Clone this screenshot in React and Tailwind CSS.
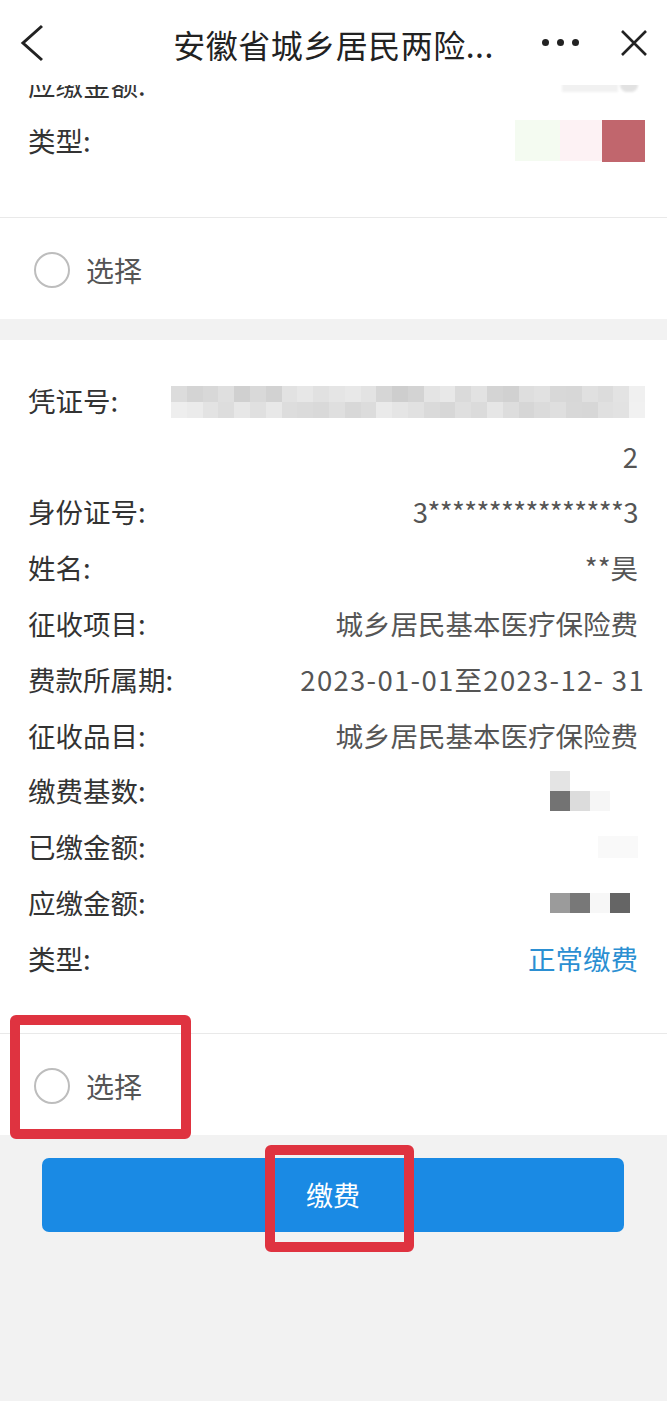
import React from "react";

const FONT = { fontFamily: '"Noto Sans CJK SC", "Noto Sans", sans-serif' };

const topRow = ["#dcdcdc","#d4d4d4","#d8d8d8","#dfdfdf","#d0d0d0","#d9d9d9","#d2d2d2","#e2e2e2","#e7e7e7","#e1e1e1","#e5e5e5","#e8e8e8","#e3e3e3","#d6d6d6","#cecece","#d3d3d3","#e4e4e4","#e8e8e8","#dadada","#e2e2e2","#d4d4d4","#d1d1d1","#dedede","#e1e1e1","#d8d8d8","#d7d7d7","#e0e0e0","#dcdcdc","#e3e3e3","#f0f0f0"];
const botRow = ["#eeeeee","#ebebeb","#e3e3e3","#dddddd","#e7e7e7","#e0e0e0","#e8e8e8","#dddddd","#dbdbdb","#d9d9d9","#dfdfdf","#d8d8d8","#dcdcdc","#eaeaea","#e5e5e5","#e1e1e1","#dadada","#d7d7d7","#dfdfdf","#dbdbdb","#e6e6e6","#dddddd","#d6d6d6","#dbdbdb","#dfdfdf","#d8d8d8","#d7d7d7","#e0e0e0","#e2e2e2","#f1f1f1"];

function Row({ label, children }) {
  return (
    <div className="flex h-[55.8px] items-center justify-between pl-[28px] pr-[29px]">
      <span className="text-[27.5px] text-[#333333] whitespace-nowrap">{label}</span>
      <div className="flex items-center justify-end text-[27.5px] text-[#555555] whitespace-nowrap">{children}</div>
    </div>
  );
}

function SelectRow() {
  return (
    <div className="flex h-[102px] items-center border-t border-[#e9e9e9] pl-[34px] pt-[3px]">
      <span className="h-[36px] w-[36px] rounded-full border-2 border-[#bdbdbd]" />
      <span className="ml-[16px] text-[28px] text-[#555555]">选择</span>
    </div>
  );
}

export default function App() {
  return (
    <div className="relative min-h-[1401px] w-full bg-[#f2f2f2]" style={FONT}>
      {/* header */}
      <div className="absolute left-0 right-0 top-0 z-10 grid h-[85px] grid-cols-[1fr_auto_1fr] items-center bg-white">
        <div className="flex items-center pl-[20px]">
          <svg width="24" height="38" viewBox="0 0 24 38">
            <polyline points="22,2 3,19 22,36" fill="none" stroke="#222" strokeWidth="3" strokeLinejoin="miter" />
          </svg>
        </div>
        <div className="text-[32px] text-[#222222] pt-[2px] tracking-[0.5px]">安徽省城乡居民两险...</div>
        <div className="flex items-center justify-end pr-[19px]">
          <div className="flex items-center gap-[8px]">
            <span className="h-[7px] w-[7px] rounded-full bg-[#222]" />
            <span className="h-[7px] w-[7px] rounded-full bg-[#222]" />
            <span className="h-[7px] w-[7px] rounded-full bg-[#222]" />
          </div>
          <svg className="ml-[41px]" width="28" height="28" viewBox="0 0 28 28">
            <path d="M2 2 L26 26 M26 2 L2 26" stroke="#222" strokeWidth="2.6" fill="none" />
          </svg>
        </div>
      </div>

      {/* first card (scrolled) */}
      <div className="bg-white pt-[57px]">
        <Row label="应缴金额:">
          <div className="flex items-center blur-[1px]">
            <span className="h-[14px] w-[56px] bg-[#f1f1f1]" />
            <span className="h-[14px] w-[18px] bg-[#e2e2e2] rounded-full ml-[2px]" />
          </div>
        </Row>
        <Row label="类型:">
          <div className="mr-[-7px] flex">
            <span className="h-[41px] w-[45px] bg-[#f4fbf1]" />
            <span className="h-[41px] w-[42px] bg-[#fdf2f4]" />
            <span className="h-[42px] w-[43px] bg-[#c1666d]" />
          </div>
        </Row>
        <div className="h-[48px]" />
        <SelectRow />
      </div>

      <div className="h-[21px]" />

      {/* second card */}
      <div className="bg-white pt-[33px]">
        <div className="flex pl-[28px] pr-[29px]">
          <div className="flex h-[55.8px] items-center">
            <span className="text-[27.5px] text-[#333333] whitespace-nowrap">凭证号:</span>
          </div>
          <div className="flex flex-1 flex-col items-end">
            <div className="flex h-[55.8px] items-center mr-[-7px] pt-[4px]">
              <div className="flex flex-col blur-[0.6px]">
                <div className="flex">
                  {topRow.map((c, i) => (
                    <span key={i} className="h-[16px] w-[15.8px]" style={{ backgroundColor: c }} />
                  ))}
                </div>
                <div className="flex">
                  {botRow.map((c, i) => (
                    <span key={i} className="h-[16px] w-[15.8px]" style={{ backgroundColor: c }} />
                  ))}
                </div>
              </div>
            </div>
            <div className="flex h-[55.8px] items-center text-[27.5px] text-[#555555]">2</div>
          </div>
        </div>
        <Row label="身份证号:">
          <span className="tracking-[-0.6px]">3****************3</span>
        </Row>
        <Row label="姓名:">**昊</Row>
        <Row label="征收项目:">城乡居民基本医疗保险费</Row>
        <Row label="费款所属期:">
          <span className="mr-[-7px] tracking-[1.3px]">2023-01-01至2023-12- 31</span>
        </Row>
        <Row label="征收品目:">城乡居民基本医疗保险费</Row>
        <Row label="缴费基数:">
          <div className="mr-[28px] flex flex-col">
            <div className="flex">
              <span className="h-[20px] w-[20px] bg-[#e4e4e4]" />
            </div>
            <div className="flex">
              <span className="h-[20px] w-[20px] bg-[#737373]" />
              <span className="h-[20px] w-[20px] bg-[#dcdcdc]" />
              <span className="h-[20px] w-[20px] bg-[#f6f6f6]" />
            </div>
          </div>
        </Row>
        <Row label="已缴金额:">
          <span className="h-[22px] w-[40px] bg-[#f9f9f9]" />
        </Row>
        <Row label="应缴金额:">
          <div className="mr-[8px] flex">
            <span className="h-[20px] w-[20px] bg-[#9b9b9b]" />
            <span className="h-[20px] w-[20px] bg-[#787878]" />
            <span className="h-[20px] w-[20px] bg-[#f7f7f7]" />
            <span className="h-[20px] w-[20px] bg-[#656565]" />
          </div>
        </Row>
        <Row label="类型:">
          <span className="text-[#2b8fd2]">正常缴费</span>
        </Row>
        <div className="h-[47px]" />
        <SelectRow />
      </div>

      {/* button */}
      <div className="pl-[42px] pr-[43px] pt-[23px]">
        <div className="flex h-[74px] items-center justify-center rounded-[7px] bg-[#1a8ae4] text-[27px] text-white">
          缴费
        </div>
      </div>

      {/* annotation boxes */}
      <div className="absolute left-[10px] top-[1015px] h-[124px] w-[181px] rounded-[6px] border-[10px] border-[#df3340]" />
      <div className="absolute left-[265px] top-[1145px] h-[107px] w-[149px] rounded-[6px] border-[10px] border-[#df3340]" />
    </div>
  );
}
